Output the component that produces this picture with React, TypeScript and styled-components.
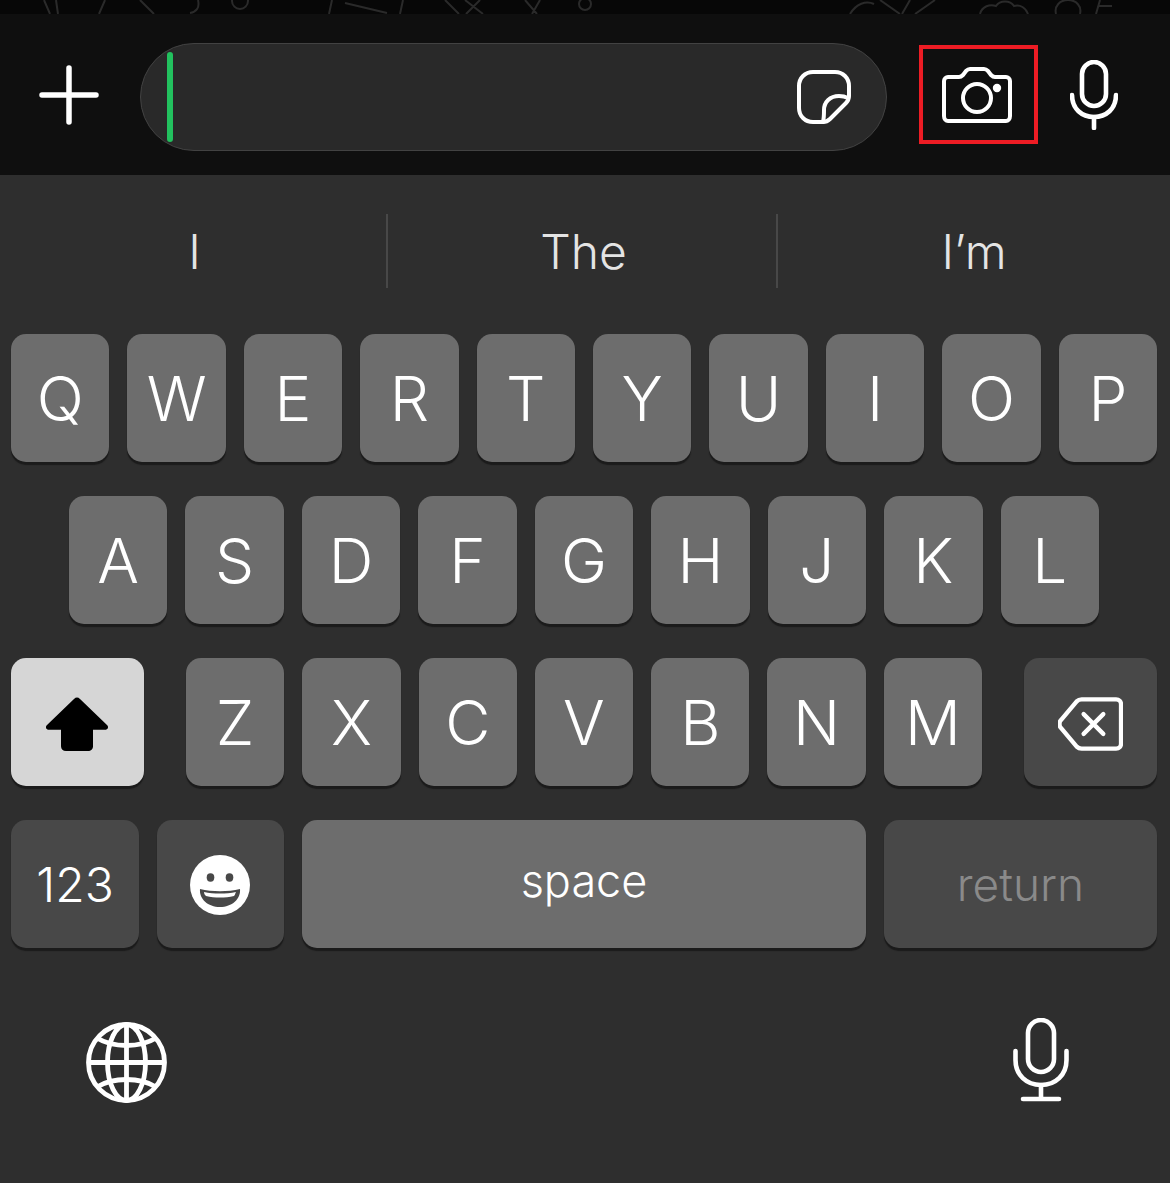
import React from 'react'
import styled, { createGlobalStyle } from 'styled-components'

const GlobalStyle = createGlobalStyle`
  html, body {
    margin: 0;
    padding: 0;
    background: #2e2e2e;
  }
  * {
    box-sizing: border-box;
  }
`

const Screen = styled.div`
  width: 1170px;
  height: 1183px;
  overflow: hidden;
  display: flex;
  flex-direction: column;
  background: #2e2e2e;
  font-family: Inter, 'Liberation Sans', sans-serif;
  color: #fff;
`

const Wallpaper = styled.svg`
  display: block;
  width: 1170px;
  height: 14px;
  flex: none;
  background: #070707;
`

const InputBar = styled.div`
  height: 161px;
  flex: none;
  display: flex;
  align-items: center;
  padding-left: 39px;
  background: #0f0f0f;
`

const PlusIcon = styled.svg`
  width: 60px;
  height: 60px;
  flex: none;
  margin-right: 41px;
`

const Composer = styled.div`
  width: 747px;
  height: 108px;
  flex: none;
  margin-top: 4px;
  margin-right: 32px;
  padding: 0 34px 0 26px;
  display: flex;
  align-items: center;
  justify-content: space-between;
  background: #292929;
  border: 1px solid #424242;
  border-radius: 54px;
`

const Caret = styled.div`
  width: 6px;
  height: 90px;
  border-radius: 3px;
  background: #22c15e;
`

const CameraFrame = styled.div`
  width: 119px;
  height: 99px;
  flex: none;
  margin-right: 32px;
  padding-right: 3px;
  display: flex;
  align-items: center;
  justify-content: center;
  border: 4px solid #ed1c24;
`

const Board = styled.div`
  flex: 1;
  display: flex;
  flex-direction: column;
`

const Suggestions = styled.div`
  height: 74px;
  margin: 39px 0 46px;
  display: grid;
  grid-template-columns: 388px 390px 1fr;
`

const Suggestion = styled.div<{ $divided?: boolean }>`
  display: flex;
  align-items: center;
  justify-content: center;
  font-size: 48px;
  font-weight: 350;
  color: #e4e4e4;
  padding-left: ${({ $divided }) => ($divided ? '3px' : '0')};
  border-right: ${({ $divided }) => ($divided ? '2px solid #484848' : 'none')};
`

const Rows = styled.div`
  display: flex;
  flex-direction: column;
  gap: 33px;
  padding: 0 13px 0 11px;
`

const Row = styled.div<{ $inset?: number }>`
  display: flex;
  gap: 18px;
  height: 129px;
  padding: 0 ${({ $inset }) => $inset ?? 0}px;
`

const Letters = styled.div`
  flex: 1;
  display: flex;
  gap: 18px;
  margin: 0 24px;
`

const Key = styled.div<{ $tone?: 'light' | 'dark' | 'white'; $width?: number }>`
  display: flex;
  align-items: center;
  justify-content: center;
  height: 128px;
  border-radius: 15px;
  box-shadow: 0 3px 1px #1b1b1b;
  font-size: 62px;
  font-weight: 350;
  color: #fff;
  flex: ${({ $width }) => ($width ? `0 0 ${$width}px` : '1 1 0')};
  background: ${({ $tone }) =>
    $tone === 'dark' ? '#484848' : $tone === 'white' ? '#d6d6d6' : '#6d6d6d'};
`

const NumbersLabel = styled.span`
  font-size: 48px;
`

const SpaceLabel = styled.span`
  font-size: 45px;
  margin-bottom: 8px;
`

const ReturnLabel = styled.span`
  font-size: 46px;
  color: #8a8a8a;
`

const KeyGlyph = styled.svg<{ $left?: number; $top?: number }>`
  margin-right: ${({ $left }) => $left ?? 0}px;
  margin-top: ${({ $top }) => $top ?? 0}px;
`

const BottomRow = styled.div`
  display: flex;
  align-items: flex-start;
  justify-content: space-between;
  margin-top: 69px;
  padding: 0 101px 0 86px;
`

const GlobeSvg = styled.svg`
  width: 81px;
  height: 81px;
  margin-top: 4px;
`

const keyRows = ['QWERTYUIOP', 'ASDFGHJKL', 'ZXCVBNM']

const StickerIcon = () => (
  <svg width="56" height="56" viewBox="0 0 56 56" fill="none" stroke="#fff" strokeWidth="4" strokeLinecap="round" strokeLinejoin="round">
    <path d="M17 3h22c8 0 14 6 14 14v10c0 3-1 5-3 7L34 50c-2 2-4 3-7 3H17C9 53 3 47 3 39V17C3 9 9 3 17 3z" />
    <path d="M52 29c-2-1-5-2-9-2-9 0-15 6-15 14 0 4 0 8-1 12" />
  </svg>
)

const CameraIcon = () => (
  <svg width="70" height="56" viewBox="0 0 70 56" fill="none" stroke="#fff" strokeWidth="4" strokeLinecap="round" strokeLinejoin="round">
    <path d="M6 10h11c2 0 3-1 4-2l3-4c1-1 2-2 4-2h14c2 0 3 1 4 2l3 4c1 1 2 2 4 2h11c2 0 4 2 4 4v35c0 3-2 5-4 5H6c-2 0-4-2-4-5V14c0-2 2-4 4-4z" />
    <circle cx="35" cy="31" r="14" />
    <circle cx="55" cy="21" r="2.2" fill="#fff" />
  </svg>
)

const ChatMicIcon = () => (
  <svg width="48" height="70" viewBox="0 0 48 70" fill="none" stroke="#fff" strokeWidth="4.6" strokeLinecap="round">
    <rect x="12" y="2" width="24" height="44" rx="12" />
    <path d="M2 35c0 14 10 22 22 22s22-8 22-22" />
    <path d="M24 57v11" />
  </svg>
)

const DeleteIcon = () => (
  <KeyGlyph $top={4} width="65" height="54" viewBox="0 0 66 54" fill="none" stroke="#fff" strokeWidth="4.4" strokeLinecap="round" strokeLinejoin="round">
    <path d="M24 2h35c3 0 5 2 5 5v40c0 3-2 5-5 5H24c-2 0-4-1-5-2L3 31c-2-2-2-6 0-8L19 4c1-1 3-2 5-2z" />
    <path d="M26 17l20 20M46 17L26 37" />
  </KeyGlyph>
)

const ShiftIcon = () => (
  <KeyGlyph $left={2} $top={4} width="64" height="54" viewBox="0 0 64 56" preserveAspectRatio="none" fill="#000">
    <path d="M29 2c2-2 4-2 6 0l27 27c2 2 1 5-2 5H48v17c0 3-2 5-5 5H21c-3 0-5-2-5-5V34H4c-3 0-4-3-2-5z" />
  </KeyGlyph>
)

const EmojiIcon = () => (
  <KeyGlyph $left={2} $top={2} width="60" height="60" viewBox="0 0 60 60">
    <circle cx="30" cy="30" r="30" fill="#fff" />
    <ellipse cx="20.5" cy="22.5" rx="3.8" ry="4.2" fill="#484848" />
    <ellipse cx="39.5" cy="22.5" rx="3.8" ry="4.2" fill="#484848" />
    <path d="M10 34c12 3 28 3 40 0 1 10-8 18-20 18S9 44 10 34z" fill="#484848" />
    <path d="M14 37c10 2 22 2 32 0-1 2-1 3-2 4-9 2-19 2-28 0-1-1-2-2-2-4z" fill="#fff" />
  </KeyGlyph>
)

const GlobeIcon = () => (
  <GlobeSvg viewBox="0 0 81 81" fill="none" stroke="#fff" strokeWidth="4.8">
    <circle cx="40.5" cy="40.5" r="38" />
    <ellipse cx="40.5" cy="40.5" rx="19" ry="38" />
    <path d="M40.5 2.5v76M2.5 40.5h76" />
    <path d="M11 16c16 10 43 10 59 0M11 65c16-10 43-10 59 0" />
  </GlobeSvg>
)

const DictationIcon = () => (
  <svg width="56" height="84" viewBox="0 0 56 84" fill="none" stroke="#fff" strokeWidth="4.6" strokeLinecap="round">
    <rect x="15" y="2" width="26" height="52" rx="13" />
    <path d="M2.5 33v9c0 15 11 25 25.500 25s25.500-10 25.500-25v-9" />
    <path d="M28 67v14M10 81h36" />
  </svg>
)

export default function App() {
  return (
    <Screen>
      <GlobalStyle />
      <Wallpaper viewBox="0 0 1170 14" fill="none" stroke="#2a2a2a" strokeWidth="2">
        <path d="M44 0l6 14M56 0l2 14M105 0l-6 14M140 0l14 14M198 0c2 8-2 12-8 13" />
        <circle cx="240" cy="1" r="8" />
        <path d="M332 0l-3 14M345 3l42 10M403 0l-3 14M445 0l14 14M480 0l-14 14M465 0l18 14M525 0l12 14M540 0l-8 14" />
        <circle cx="585" cy="4" r="6" />
        <path d="M850 14c6-10 16-14 24-10M880 0l20 14M910 0l-8 14M935 0l-20 14" />
        <path d="M980 14c2-8 10-10 16-8 4-6 14-6 18 0 6-2 12 2 14 8" />
        <path d="M1056 14c-2-8 4-14 12-14s14 6 12 14M1100 0l-4 14M1098 6h14" />
      </Wallpaper>
      <InputBar>
        <PlusIcon viewBox="0 0 60 60" stroke="#fff" strokeWidth="5.500" strokeLinecap="round">
          <path d="M30 3v54M3 30h54" />
        </PlusIcon>
        <Composer>
          <Caret />
          <StickerIcon />
        </Composer>
        <CameraFrame>
          <CameraIcon />
        </CameraFrame>
        <ChatMicIcon />
      </InputBar>
      <Board>
        <Suggestions>
          <Suggestion $divided>I</Suggestion>
          <Suggestion $divided>The</Suggestion>
          <Suggestion>I’m</Suggestion>
        </Suggestions>
        <Rows>
          <Row>
            {keyRows[0].split('').map((letter) => (
              <Key key={letter}>{letter}</Key>
            ))}
          </Row>
          <Row $inset={58}>
            {keyRows[1].split('').map((letter) => (
              <Key key={letter}>{letter}</Key>
            ))}
          </Row>
          <Row>
            <Key $tone="white" $width={133}>
              <ShiftIcon />
            </Key>
            <Letters>
              {keyRows[2].split('').map((letter) => (
                <Key key={letter}>{letter}</Key>
              ))}
            </Letters>
            <Key $tone="dark" $width={133}>
              <DeleteIcon />
            </Key>
          </Row>
          <Row>
            <Key $tone="dark" $width={128}>
              <NumbersLabel>123</NumbersLabel>
            </Key>
            <Key $tone="dark" $width={127}>
              <EmojiIcon />
            </Key>
            <Key $width={564}>
              <SpaceLabel>space</SpaceLabel>
            </Key>
            <Key $tone="dark">
              <ReturnLabel>return</ReturnLabel>
            </Key>
          </Row>
        </Rows>
        <BottomRow>
          <GlobeIcon />
          <DictationIcon />
        </BottomRow>
      </Board>
    </Screen>
  )
}
